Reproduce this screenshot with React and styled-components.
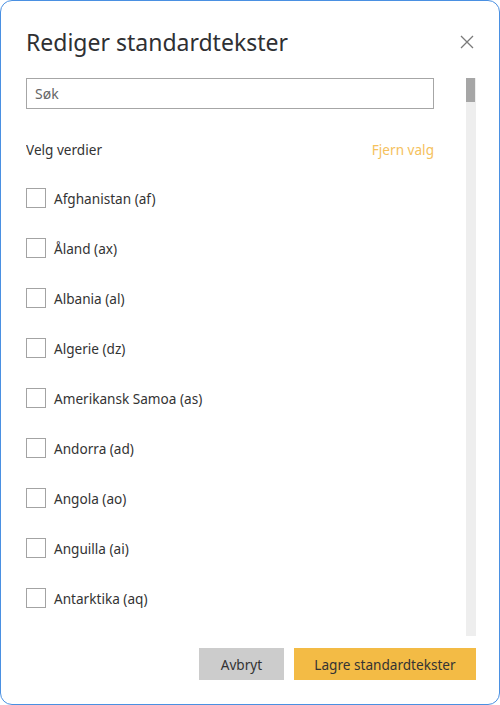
import React from 'react';
import styled, { createGlobalStyle } from 'styled-components';

const GlobalStyle = createGlobalStyle`
  body {
    margin: 0;
    font-family: 'Noto Sans', 'Open Sans', sans-serif;
    color: #333;
    background: #fff;
  }
`;

const Dialog = styled.div`
  width: 500px;
  height: 705px;
  box-sizing: border-box;
  border: 1px solid #4a90e2;
  border-radius: 12px;
  display: flex;
  flex-direction: column;
  padding: 0 23px 0 25px;
  overflow: hidden;
`;

const Header = styled.header`
  display: flex;
  align-items: center;
  justify-content: space-between;
  padding-top: 23px;
  height: 36px;
  margin-bottom: 18px;
`;

const Title = styled.h1`
  margin: 0;
  font-size: 23px;
  font-weight: 400;
  line-height: 36px;
  color: #2f3033;
`;

const Close = styled.button`
  border: 0;
  background: none;
  padding: 0;
  width: 16px;
  height: 16px;
  margin-right: 1px;
  display: flex;
  align-items: center;
  justify-content: center;
  cursor: pointer;
`;

const Body = styled.div`
  display: flex;
  height: 558px;
  gap: 32px;
`;

const Content = styled.div`
  width: 408px;
  overflow: hidden;
`;

const Search = styled.input`
  width: 100%;
  height: 31px;
  box-sizing: border-box;
  border: 1px solid #a6a6a6;
  padding: 0 8px;
  font-family: inherit;
  font-size: 14px;
  color: #333;
  outline: none;
  &::placeholder {
    color: #666;
  }
`;

const SelectRow = styled.div`
  display: flex;
  justify-content: space-between;
  align-items: center;
  margin-top: 31px;
  height: 20px;
  font-size: 13.6px;
  line-height: 20px;
`;

const ClearLink = styled.a`
  color: #f5c15c;
  cursor: pointer;
`;

const List = styled.ul`
  list-style: none;
  margin: 13px 0 0;
  padding: 0;
`;

const Item = styled.li`
  display: flex;
  align-items: center;
  gap: 8px;
  height: 50px;
  font-size: 13.6px;
  color: #333;
`;

const Box = styled.span`
  width: 20px;
  height: 20px;
  box-sizing: border-box;
  border: 1px solid #a3a3a3;
  background: #fff;
  flex: none;
`;

const Track = styled.div`
  width: 10px;
  background: #eeeeee;
  flex: none;
`;

const Thumb = styled.div`
  width: 9px;
  height: 24px;
  background: #a6a6a6;
`;

const Footer = styled.footer`
  display: flex;
  justify-content: flex-end;
  gap: 10px;
  margin-top: 12px;
`;

const Button = styled.button`
  height: 32px;
  width: ${p => p.$width}px;
  border: 0;
  background: ${p => (p.$primary ? '#f3bb45' : '#cccccc')};
  color: #333;
  font-family: inherit;
  font-size: 13.6px;
  cursor: pointer;
`;

const countries = [
  'Afghanistan (af)',
  'Åland (ax)',
  'Albania (al)',
  'Algerie (dz)',
  'Amerikansk Samoa (as)',
  'Andorra (ad)',
  'Angola (ao)',
  'Anguilla (ai)',
  'Antarktika (aq)',
];

export default function App() {
  return (
    <>
      <GlobalStyle />
      <Dialog>
        <Header>
          <Title>Rediger standardtekster</Title>
          <Close aria-label="Lukk">
            <svg width="14" height="14" viewBox="0 0 14 14">
              <path d="M1 1L13 13M13 1L1 13" stroke="#7a7a7a" strokeWidth="1.3" fill="none" />
            </svg>
          </Close>
        </Header>
        <Body>
          <Content>
            <Search placeholder="Søk" />
            <SelectRow>
              <span>Velg verdier</span>
              <ClearLink>Fjern valg</ClearLink>
            </SelectRow>
            <List>
              {countries.map(c => (
                <Item key={c}>
                  <Box />
                  {c}
                </Item>
              ))}
            </List>
          </Content>
          <Track>
            <Thumb />
          </Track>
        </Body>
        <Footer>
          <Button $width={85}>Avbryt</Button>
          <Button $width={182} $primary>Lagre standardtekster</Button>
        </Footer>
      </Dialog>
    </>
  );
}
